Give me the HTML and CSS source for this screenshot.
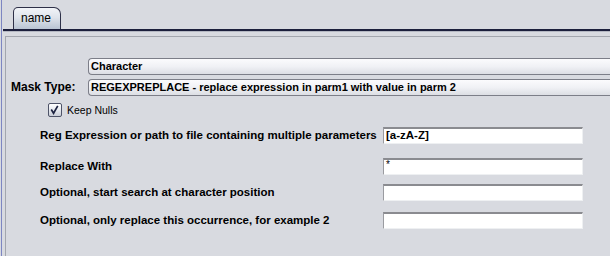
FILE: index.html
```html
<!DOCTYPE html>
<html>
<head>
<meta charset="utf-8">
<link rel="stylesheet" href="styles.css">
</head>
<body>
<div class="window">
  <div class="tabbar">
    <div class="tab">name</div>
  </div>
  <div class="rule"></div>
  <div class="panel">
    <div class="mask">
      <div class="combo mask-c1">Character</div>
      <div class="mask-label">Mask Type:</div>
      <div class="combo">REGEXPREPLACE - replace expression in parm1 with value in parm 2</div>
    </div>
    <div class="check-row">
      <span class="checkbox">
        <svg width="14" height="14" viewBox="0 0 14 14"><path d="M3.5 6.5 L6 10.5 L10.5 2.5" fill="none" stroke="#1c2240" stroke-width="1.8" stroke-linejoin="miter"/></svg>
      </span>
      <span class="check-label">Keep Nulls</span>
    </div>
    <div class="fields">
      <div class="flabel">Reg Expression or path to file containing multiple parameters</div>
      <div class="field">[a-zA-Z]</div>
      <div class="flabel">Replace With</div>
      <div class="field field-plain">*</div>
      <div class="flabel">Optional, start search at character position</div>
      <div class="field"></div>
      <div class="flabel">Optional, only replace this occurrence, for example 2</div>
      <div class="field"></div>
    </div>
  </div>
</div>
</body>
</html>
```
FILE: styles.css
```css
html, body {
  margin: 0;
  padding: 0;
}
body {
  background: #d8dae0;
  width: 610px;
  height: 256px;
  overflow: hidden;
  font-family: "Liberation Sans", Arial, sans-serif;
  color: #000;
}
.window {
  margin-left: 1px;
  border-left: 1px solid #7d86c2;
  height: 256px;
  display: flex;
  flex-direction: column;
}
.tabbar {
  height: 29px;
  margin-left: 1px;
  padding-left: 10px;
  display: flex;
  align-items: flex-end;
  border-bottom: 2px solid #1c1f3c;
}
.tab {
  box-sizing: border-box;
  width: 48px;
  height: 22px;
  border: 1px solid #2e3048;
  border-bottom: none;
  border-radius: 5px 7px 0 0;
  background: linear-gradient(#f2f4f8, #dfe4ec 45%, #b9c4d3);
  font-size: 12px;
  line-height: 20px;
  padding-left: 7px;
}
.rule {
  height: 1px;
  margin-left: 1px;
  background: #b4b7c2;
}
.panel {
  flex: 1;
  margin-top: 4px;
  margin-left: 3px;
  border-top: 1px solid #a3a6ae;
  border-left: 1px solid #a3a6ae;
  padding: 21px 0 0 5px;
}
.mask {
  display: grid;
  grid-template-columns: 77px 1fr;
  row-gap: 4px;
}
.mask-c1 {
  grid-column: 2;
}
.combo {
  box-sizing: border-box;
  height: 17px;
  border: 1px solid #7c7e88;
  border-right: none;
  border-radius: 4px 0 0 4px;
  background: linear-gradient(#fbfbfd, #f0f1f5 50%, #dcdee4);
  font-size: 11px;
  font-weight: bold;
  line-height: 15px;
  padding-left: 2px;
  white-space: nowrap;
}
.mask-label {
  font-size: 12px;
  font-weight: bold;
  align-self: center;
  line-height: 17px;
}
.check-row {
  display: flex;
  align-items: center;
  margin-top: 7px;
  padding-left: 37px;
  gap: 5px;
}
.checkbox {
  box-sizing: border-box;
  width: 14px;
  height: 14px;
  border: 1px solid #4e5368;
  border-radius: 2px;
  background: linear-gradient(#ffffff, #e6e9ef 50%, #c8ccd6);
  display: flex;
}
.checkbox svg {
  margin: -1px 0 0 -1px;
}
.check-label {
  font-size: 10.5px;
}
.fields {
  display: grid;
  grid-template-columns: 343px 200px;
  grid-template-rows: 31px 26px 28px 17px;
  margin-top: 10px;
  padding-left: 29px;
  align-items: start;
}
.flabel {
  font-size: 11.5px;
  font-weight: bold;
  white-space: nowrap;
  line-height: 17px;
}
.field {
  box-sizing: border-box;
  height: 17px;
  background: #fff;
  border-top: 2px solid #8a8b90;
  border-left: 1px solid #9a9ba0;
  border-right: 1px solid #eef0f2;
  border-bottom: 1px solid #eef0f2;
  font-size: 11.5px;
  font-weight: bold;
  line-height: 13px;
  padding-left: 2px;
}
.field-plain {
  font-weight: normal;
  font-size: 10px;
  line-height: 10px;
}
```
